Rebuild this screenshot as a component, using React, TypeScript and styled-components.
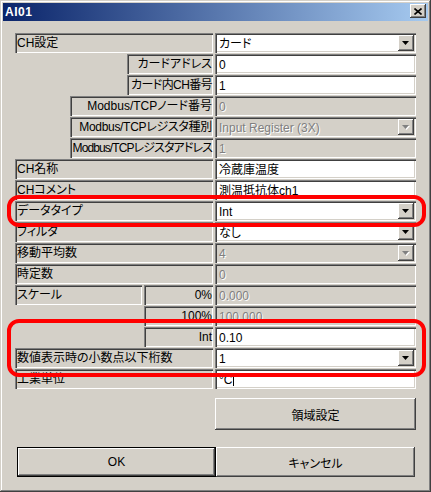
import React from "react";
import styled, { createGlobalStyle } from "styled-components";

const GlobalStyle = createGlobalStyle`
  html, body {
    margin: 0;
    padding: 0;
    background: #d4d0c8;
  }
  body {
    font-family: "Liberation Sans", "Noto Sans CJK JP", sans-serif;
    font-size: 12px;
    font-feature-settings: "palt";
  }
`;

type Row = {
  labels: { text: string; width: number; align?: "left" | "right"; tight?: number }[];
  value: string;
  kind: "input" | "combo";
  disabled?: boolean;
  caret?: boolean;
};

const rows: Row[] = [
  { labels: [{ text: "CH設定", width: 198 }], value: "カード", kind: "combo" },
  { labels: [{ text: "カードアドレス", width: 86, align: "right" }], value: "0", kind: "input" },
  { labels: [{ text: "カード内CH番号", width: 86, align: "right", tight: -0.6 }], value: "1", kind: "input" },
  { labels: [{ text: "Modbus/TCPノード番号", width: 143, align: "right" }], value: "0", kind: "input", disabled: true },
  { labels: [{ text: "Modbus/TCPレジスタ種別", width: 143, align: "right", tight: -0.3 }], value: "Input Register (3X)", kind: "combo", disabled: true },
  { labels: [{ text: "Modbus/TCPレジスタアドレス", width: 143, align: "right", tight: -0.9 }], value: "1", kind: "input", disabled: true },
  { labels: [{ text: "CH名称", width: 198 }], value: "冷蔵庫温度", kind: "input" },
  { labels: [{ text: "CHコメント", width: 198 }], value: "測温抵抗体ch1", kind: "input" },
  { labels: [{ text: "データタイプ", width: 198 }], value: "Int", kind: "combo" },
  { labels: [{ text: "フィルタ", width: 198 }], value: "なし", kind: "combo" },
  { labels: [{ text: "移動平均数", width: 198 }], value: "4", kind: "combo", disabled: true },
  { labels: [{ text: "時定数", width: 198 }], value: "0", kind: "input", disabled: true },
  {
    labels: [
      { text: "スケール", width: 127 },
      { text: "0%", width: 69, align: "right" },
    ],
    value: "0.000",
    kind: "input",
    disabled: true,
  },
  { labels: [{ text: "100%", width: 69, align: "right" }], value: "100.000", kind: "input", disabled: true },
  { labels: [{ text: "Int", width: 69, align: "right" }], value: "0.10", kind: "input" },
  { labels: [{ text: "数値表示時の小数点以下桁数", width: 198 }], value: "1", kind: "combo" },
  { labels: [{ text: "工業単位", width: 198 }], value: "°C", kind: "input", caret: true },
];

const raised = `
  box-shadow: inset -1px -1px #404040, inset 1px 1px #ffffff,
    inset -2px -2px #808080, inset 2px 2px #d4d0c8;
`;

const Window = styled.div`
  position: relative;
  width: 431px;
  height: 492px;
  box-sizing: border-box;
  padding: 3px;
  background: #d4d0c8;
  box-shadow: inset -1px -1px #404040, inset 1px 1px #d4d0c8,
    inset -2px -2px #808080, inset 2px 2px #ffffff;
  overflow: hidden;
`;

const TitleBar = styled.div`
  height: 18px;
  display: flex;
  align-items: center;
  justify-content: space-between;
  padding: 0 2px 0 2px;
  background: linear-gradient(to right, #0a246a, #a6caf0);
`;

const Title = styled.span`
  color: #ffffff;
  font-weight: bold;
  font-size: 12px;
  letter-spacing: 0.5px;
`;

const CloseButton = styled.div`
  width: 16px;
  height: 14px;
  margin-top: -2px;
  display: flex;
  align-items: center;
  justify-content: center;
  background: #d4d0c8;
  ${raised}
`;

const Body = styled.div`
  padding: 12px 13px 0 12px;
`;

const Form = styled.div`
  display: flex;
  flex-direction: column;
  gap: 1px;
`;

const FormRow = styled.div`
  display: grid;
  grid-template-columns: 198px 201px;
  column-gap: 2px;
  height: 20px;
`;

const LabelCell = styled.div`
  display: flex;
  justify-content: flex-end;
  gap: 2px;
`;

const Label = styled.div<{ $width: number; $align?: "left" | "right"; $tight?: number }>`
  width: ${(p) => p.$width}px;
  height: 20px;
  box-sizing: border-box;
  padding: 1px 1px 0 2px;
  line-height: 19px;
  text-align: ${(p) => p.$align ?? "left"};
  letter-spacing: ${(p) => p.$tight ?? 0}px;
  white-space: nowrap;
  overflow: hidden;
  color: #000000;
  box-shadow: inset 1px 1px #808080, inset 2px 2px #404040, inset -1px -1px #ffffff;
`;

const Field = styled.div<{ $disabled?: boolean }>`
  position: relative;
  height: 20px;
  box-sizing: border-box;
  display: flex;
  align-items: center;
  padding: 1px 2px 0 4px;
  background: ${(p) => (p.$disabled ? "#d4d0c8" : "#ffffff")};
  color: ${(p) => (p.$disabled ? "#808080" : "#000000")};
  text-shadow: ${(p) => (p.$disabled ? "1px 1px #ffffff" : "none")};
  box-shadow: inset 1px 1px #808080, inset 2px 2px #404040,
    inset -1px -1px #ffffff, inset -2px -2px #d4d0c8;
  white-space: nowrap;
`;

const FieldText = styled.span`
  flex: 1;
  line-height: 16px;
`;

const Caret = styled.span`
  display: inline-block;
  width: 1px;
  height: 13px;
  margin-left: 1px;
  vertical-align: -2px;
  background: #000000;
`;

const DropButton = styled.div`
  width: 16px;
  height: 16px;
  margin: -1px 0 0 0;
  display: flex;
  align-items: center;
  justify-content: center;
  background: #d4d0c8;
  ${raised}
`;

const AreaRow = styled.div`
  display: grid;
  grid-template-columns: 198px 201px;
  column-gap: 2px;
  margin-top: 9px;
`;

const Button = styled.div<{ $default?: boolean; $height: number; $width: number }>`
  grid-column: 2;
  width: ${(p) => p.$width}px;
  height: ${(p) => p.$height}px;
  box-sizing: border-box;
  display: flex;
  align-items: center;
  justify-content: center;
  background: #d4d0c8;
  color: #000000;
  border: ${(p) => (p.$default ? "1px solid #000000" : "none")};
  ${raised}
`;

const Footer = styled.div`
  display: flex;
  margin: 17px 0 0 2px;
`;

const Highlight = styled.div<{ $top: number; $height: number }>`
  position: absolute;
  left: 7px;
  top: ${(p) => p.$top}px;
  width: 419px;
  height: ${(p) => p.$height}px;
  box-sizing: border-box;
  border: 4px solid #ff0000;
  border-radius: 12px;
  pointer-events: none;
`;

const Arrow = ({ disabled }: { disabled?: boolean }) => (
  <svg width="8" height="5" viewBox="0 0 8 5">
    {disabled && <path d="M1 1h7L4.5 5z" fill="#ffffff" />}
    <path d="M0 0h7L3.5 4z" fill={disabled ? "#808080" : "#000000"} />
  </svg>
);

const CloseIcon = () => (
  <svg width="8" height="7" viewBox="0 0 8 7">
    <path d="M0.5 0.5L7.5 6.5M7.5 0.5L0.5 6.5" stroke="#000000" strokeWidth="1.6" />
  </svg>
);

export default function App() {
  return (
    <>
      <GlobalStyle />
      <Window>
        <TitleBar>
          <Title>AI01</Title>
          <CloseButton>
            <CloseIcon />
          </CloseButton>
        </TitleBar>
        <Body>
          <Form>
            {rows.map((row, i) => (
              <FormRow key={i}>
                <LabelCell>
                  {row.labels.map((l) => (
                    <Label key={l.text} $width={l.width} $align={l.align} $tight={l.tight}>
                      {l.text}
                    </Label>
                  ))}
                </LabelCell>
                <Field $disabled={row.disabled}>
                  <FieldText>
                    {row.value}
                    {row.caret && <Caret />}
                  </FieldText>
                  {row.kind === "combo" && (
                    <DropButton>
                      <Arrow disabled={row.disabled} />
                    </DropButton>
                  )}
                </Field>
              </FormRow>
            ))}
          </Form>
          <AreaRow>
            <Button $width={201} $height={32}>
              領域設定
            </Button>
          </AreaRow>
          <Footer>
            <Button $default $width={200} $height={30}>
              OK
            </Button>
            <Button $width={200} $height={30}>
              キャンセル
            </Button>
          </Footer>
        </Body>
        <Highlight $top={195} $height={32} />
        <Highlight $top={319} $height={58} />
      </Window>
    </>
  );
}
